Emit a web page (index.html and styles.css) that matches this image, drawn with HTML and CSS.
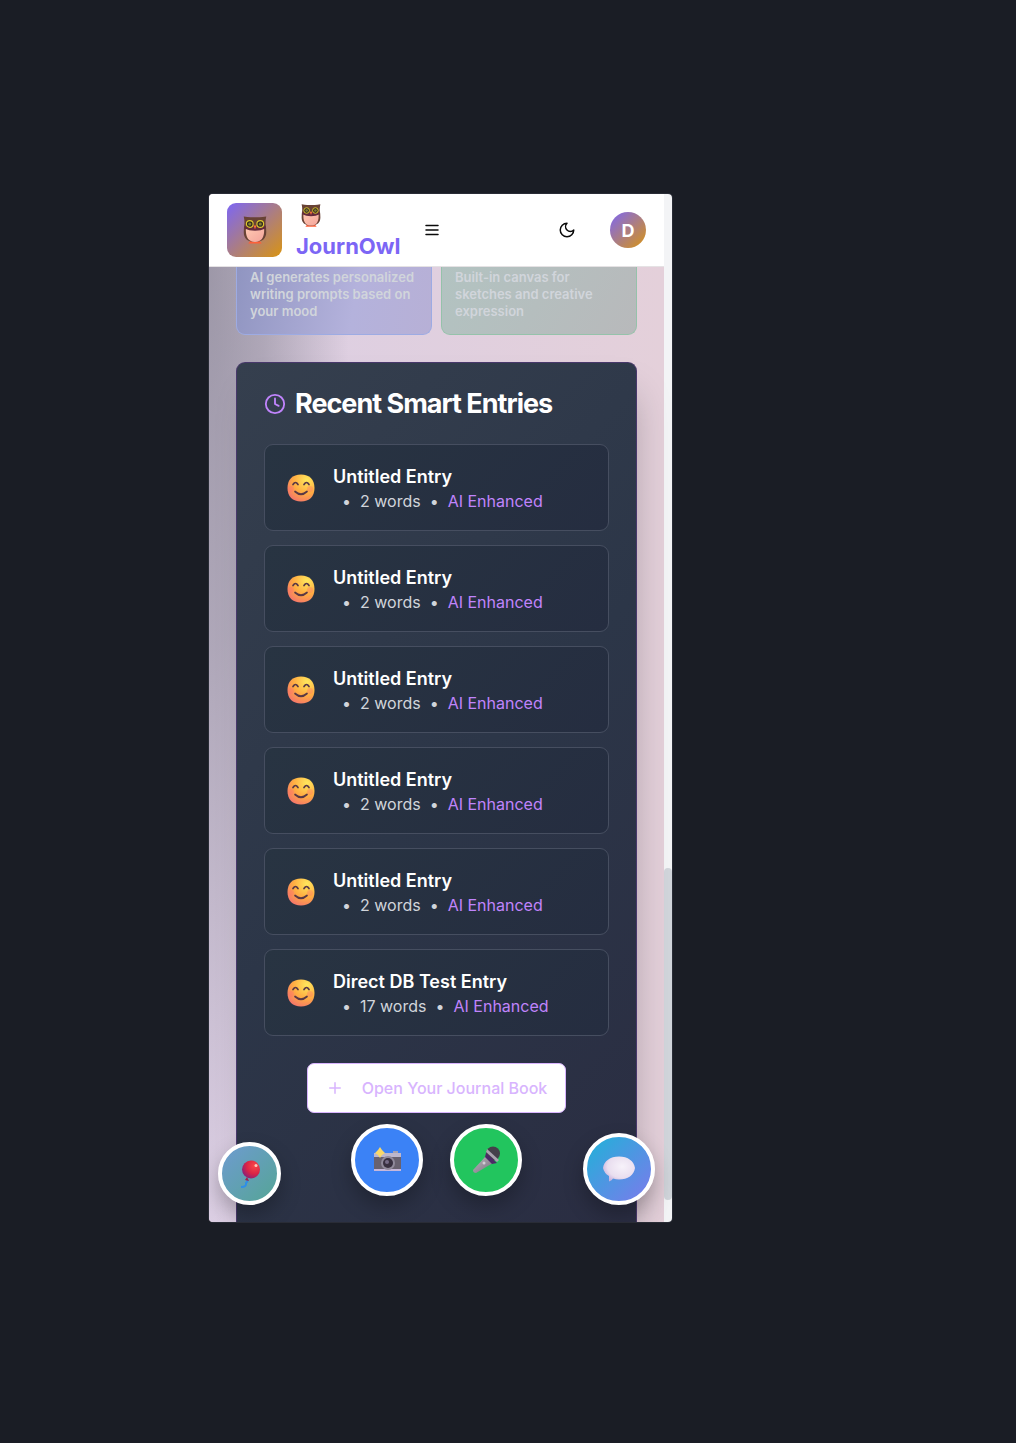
FILE: index.html
```html
<!DOCTYPE html>
<html lang="en">
<head>
<meta charset="utf-8">
<meta name="viewport" content="width=device-width, initial-scale=1">
<title>JournOwl</title>
<link rel="stylesheet" href="styles.css">
</head>
<body>
<svg class="defs" aria-hidden="true">
  <defs>
    <radialGradient id="face" cx=".72" cy=".2" r=".9"><stop offset="0" stop-color="#ffe75c"/><stop offset=".55" stop-color="#ffad42"/><stop offset="1" stop-color="#f4746b"/></radialGradient>
    <radialGradient id="balloon" cx=".7" cy=".3" r=".75"><stop offset="0" stop-color="#f94747"/><stop offset=".6" stop-color="#d92447"/><stop offset="1" stop-color="#8e2175"/></radialGradient>
    <radialGradient id="bubble" cx=".6" cy=".4" r=".65"><stop offset="0" stop-color="#f7f2fa"/><stop offset=".7" stop-color="#e9deef"/><stop offset="1" stop-color="#c9b3de"/></radialGradient>
    <linearGradient id="belly" x1="0" y1="0" x2="1" y2="1"><stop offset="0" stop-color="#ffc9b2"/><stop offset="1" stop-color="#f3a49b"/></linearGradient>
    <linearGradient id="handle" x1="0" y1="0" x2="1" y2="1"><stop offset="0" stop-color="#bdb7c0"/><stop offset="1" stop-color="#776f7e"/></linearGradient>
  </defs>
  <symbol id="owl" viewBox="0 0 32 40">
    <path d="M10 34h12l3 4H7z" fill="#ff6038"/>
    <path d="M1 2q5 1 9 1h12q4 0 9-1-1 4-1 9 1 6 1 12c0 8-5 13-15 13S1 31 1 23q0-6 1-12 0-5-1-9z" fill="#684235"/>
    <path d="M4 17h24c1 11-2 19-12 19S3 28 4 17z" fill="url(#belly)"/>
    <path d="M2 15h28v3q-6 3-14 3T2 18z" fill="#632a3c"/>
    <circle cx="9" cy="12" r="4.500" fill="#332d20" stroke="#dcc52c" stroke-width="1.500"/>
    <circle cx="23" cy="12" r="4.500" fill="#332d20" stroke="#dcc52c" stroke-width="1.500"/>
    <circle cx="9" cy="12" r="2" fill="#827d37"/><circle cx="23" cy="12" r="2" fill="#827d37"/>
    <path d="M14 14h4l-2 5z" fill="#ff703d"/>
  </symbol>
  <symbol id="smile" viewBox="0 0 28 28">
    <path d="M14 .5C22.500.5 27.500 5.500 27.500 14S22.500 27.500 14 27.500.5 22.500.5 14 5.500.5 14 .5z" fill="url(#face)"/>
    <circle cx="4" cy="15" r="3" fill="#ff6f6c" opacity=".35"/><circle cx="23" cy="15" r="3" fill="#ff6f6c" opacity=".35"/>
    <path d="M6 10.500q2.500-4 5 0M17 10.500q2.500-4 5 0M8 17.500q6 5.500 12 0" fill="none" stroke="#593845" stroke-width="1.700" stroke-linecap="round"/>
  </symbol>
</svg>

<div class="stage">
  <div class="device">
    <div class="screen">
      <header class="topbar">
        <span class="logo"><svg class="owl-lg" aria-hidden="true"><use href="#owl"/></svg></span>
        <h1 class="brand"><svg class="owl-sm" aria-hidden="true"><use href="#owl"/></svg><span>JournOwl</span></h1>
        <button class="icon-btn" aria-label="Open menu"><svg class="icon" viewBox="0 0 24 24"><path d="M4 6h16M4 12h16M4 18h16"/></svg></button>
        <button class="icon-btn theme" aria-label="Dark mode"><svg class="icon" viewBox="0 0 24 24"><path d="M12 3a6 6 0 0 0 9 9 9 9 0 1 1-9-9z"/></svg></button>
        <button class="avatar">D</button>
      </header>

      <main class="content">
        <div class="features">
          <p class="feature prompts">AI generates personalized writing prompts based on your mood</p>
          <p class="feature canvas">Built-in canvas for sketches and creative expression</p>
        </div>

        <section class="panel">
          <h2 class="panel-title"><svg class="clock" viewBox="0 0 24 24" aria-hidden="true"><circle cx="12" cy="12" r="10"/><path d="M12 6v6l4 2"/></svg>Recent Smart Entries</h2>
          <ul class="entries">
            <li class="entry"><svg class="mood" aria-hidden="true"><use href="#smile"/></svg><div><h3>Untitled Entry</h3><p class="meta"><span>•</span><span>2 words</span><span>•</span><span class="ai">AI Enhanced</span></p></div></li>
            <li class="entry"><svg class="mood" aria-hidden="true"><use href="#smile"/></svg><div><h3>Untitled Entry</h3><p class="meta"><span>•</span><span>2 words</span><span>•</span><span class="ai">AI Enhanced</span></p></div></li>
            <li class="entry"><svg class="mood" aria-hidden="true"><use href="#smile"/></svg><div><h3>Untitled Entry</h3><p class="meta"><span>•</span><span>2 words</span><span>•</span><span class="ai">AI Enhanced</span></p></div></li>
            <li class="entry"><svg class="mood" aria-hidden="true"><use href="#smile"/></svg><div><h3>Untitled Entry</h3><p class="meta"><span>•</span><span>2 words</span><span>•</span><span class="ai">AI Enhanced</span></p></div></li>
            <li class="entry"><svg class="mood" aria-hidden="true"><use href="#smile"/></svg><div><h3>Untitled Entry</h3><p class="meta"><span>•</span><span>2 words</span><span>•</span><span class="ai">AI Enhanced</span></p></div></li>
            <li class="entry"><svg class="mood" aria-hidden="true"><use href="#smile"/></svg><div><h3>Direct DB Test Entry</h3><p class="meta"><span>•</span><span>17 words</span><span>•</span><span class="ai">AI Enhanced</span></p></div></li>
          </ul>
          <button class="open-book"><svg class="icon" viewBox="0 0 24 24" aria-hidden="true"><path d="M5 12h14M12 5v14"/></svg>Open Your Journal Book</button>
        </section>
      </main>

      <button class="fab balloon" aria-label="Celebrate">
        <svg viewBox="0 0 28 28"><path d="M11 19q1 3-1 4 1 4-5 4" fill="none" stroke="#2e8fe8" stroke-width="2"/><path d="M11 17l-2 3 4 1z" fill="#a31f49"/><circle cx="15" cy="9.500" r="9" fill="url(#balloon)"/><circle cx="20" cy="5.500" r="1.500" fill="#ffc9bd"/></svg>
      </button>
      <button class="fab camera" aria-label="Take a photo">
        <svg viewBox="0 0 28 26"><path d="M20 4h5v3h-5z" fill="#a8a3b0"/><rect x="1" y="6" width="27" height="18" rx="1" fill="#68616f"/><path d="M1 6h27v4H1z" fill="#bdb7cc"/><path d="M1 22h27v2H1z" fill="#c6b7da"/><circle cx="15" cy="16" r="7" fill="#908a9b"/><circle cx="15" cy="16" r="5" fill="#383040"/><circle cx="14" cy="15" r="2" fill="#756b86"/><path d="M7 0l2 3 3 3-3 2-2 3-2-3-3-2 3-3z" fill="#f8d86a"/></svg>
      </button>
      <button class="fab mic" aria-label="Record audio">
        <svg viewBox="0 0 28 28"><path d="M14 10l7 7L4 27q-3 0-3-3z" fill="url(#handle)"/><circle cx="21" cy="7.500" r="7" fill="#44404a"/><path d="M14 7l11 10-5 1-7-7z" fill="#4c2967"/><path d="M15 3l12 11-2 2L14 6z" fill="#aaa4b0"/><circle cx="12" cy="17" r="1.500" fill="#d2ccd5"/></svg>
      </button>
      <button class="fab chat" aria-label="Open chat">
        <svg viewBox="0 0 34 28"><path d="M1 13C2 6 8 1.500 17 1.500S32 6 33 13c-1 7-7 11.500-16 11.500q-3 0-6-1-1 2-4 3V21q-5-3-6-8z" fill="url(#bubble)"/></svg>
      </button>
    </div>
    <div class="scrollbar"><div class="thumb"></div></div>
  </div>
</div>
</body>
</html>
```
FILE: styles.css
```css
* { box-sizing: border-box; }
body { margin: 0; background: #1a1d25; font-family: Inter, "Liberation Sans", sans-serif; }
h1, h2, h3, p, ul { margin: 0; padding: 0; }
button { font: inherit; border: 0; padding: 0; cursor: pointer; }
.defs { position: absolute; width: 0; height: 0; }

.stage { padding: 194px 344px 221px 209px; }
.device { display: flex; border-radius: 4px; overflow: hidden; box-shadow: 0 0 0 1px #292c36; }
.screen { position: relative; flex: 1; min-width: 0; background: #dfcbd6; }
.scrollbar { display: flex; flex-direction: column; justify-content: flex-end; flex: 0 0 8px; padding-bottom: 22px; background: #f3f4f6; }
.thumb { height: 33%; border-radius: 4px; background: #d1d5db; }

.topbar { display: flex; align-items: center; height: 73px; padding: 0 18px; background: #fff; border-bottom: 1px solid #e5e2e4; }
.logo { display: grid; place-items: center; flex: none; width: 55px; height: 54px; border-radius: 9px; background: linear-gradient(135deg, #7c66f5, #d99412); }
.owl-lg { width: 24px; height: 30px; }
.brand { display: flex; flex-direction: column; gap: 3px; margin-left: 14px; padding-top: 4px; color: #7c66f5; font-size: 22px; font-weight: 700; line-height: 30px; }
.owl-sm { width: 20px; height: 25px; margin-left: 5px; }
.icon { width: 18px; height: 18px; fill: none; stroke: currentColor; stroke-width: 2; stroke-linecap: round; stroke-linejoin: round; }
.icon-btn { display: grid; place-items: center; width: 36px; height: 36px; background: none; color: #0a0a0a; }
.brand + .icon-btn { margin-left: 14px; }
.theme { margin-left: auto; margin-right: 25px; }
.avatar { width: 36px; height: 36px; border-radius: 50%; background: linear-gradient(135deg, #7c66f5, #d99412); color: #fff; font-size: 18px; font-weight: 700; }

.content {
  padding: 0 27px;
  background:
    radial-gradient(ellipse 140px 960px at 0 0, rgba(70, 75, 85, .42), rgba(70, 75, 85, .3) 40%, rgba(70, 75, 85, 0)),
    linear-gradient(to right, #dccfe4, #e4d0da);
}
.features { display: grid; grid-template-columns: 1fr 1fr; gap: 9px; }
.feature { padding: 2px 13px 14px; border: 1px solid; border-top: 0; border-radius: 0 0 9px 9px; font-size: 13px; font-weight: 600; line-height: 17px; color: #d1d5db; }
.prompts { border-color: #9dabe3; background: linear-gradient(100deg, #9095c1, #b4b2dc 60%, #b7b0d6); }
.canvas { border-color: #95c2aa; background: linear-gradient(120deg, #b2c3c1, #b8b9bb); }

.panel { display: flex; flex-direction: column; align-items: center; margin-top: 27px; padding: 22px 27px 109px; border: 1px solid #48386b; border-bottom: 0; border-radius: 9px 9px 0 0; background: linear-gradient(135deg, #353f4e, #2c3648 50%, #2a2d42); box-shadow: 8px 22px 36px -12px rgba(0, 0, 0, .25); }
.panel-title { display: flex; align-items: center; gap: 9px; align-self: stretch; color: #fff; font-size: 27px; font-weight: 700; line-height: 38px; letter-spacing: -1px; white-space: nowrap; }
.clock { width: 22px; height: 22px; fill: none; stroke: #c084fc; stroke-width: 2; stroke-linecap: round; stroke-linejoin: round; }
.entries { display: grid; gap: 14px; align-self: stretch; margin-top: 21px; list-style: none; }
.entry { display: flex; align-items: center; gap: 18px; height: 87px; padding: 0 22px; border: 1px solid #464e60; border-radius: 9px; background: linear-gradient(135deg, #283442, #252d40); }
.mood { flex: none; width: 28px; height: 28px; }
.entry h3 { color: #fff; font-size: 18px; font-weight: 600; line-height: 26px; }
.meta { display: flex; gap: 9px; padding-left: 9px; color: #d1d5db; font-size: 16px; line-height: 22px; }
.ai { color: #c084fc; }
.open-book { display: flex; align-items: center; gap: 18px; height: 50px; margin-top: 27px; padding: 0 18px; border: 1px solid #d8b4fe; border-radius: 7px; background: #fff; color: #d8b4fe; font-size: 16px; font-weight: 500; white-space: nowrap; }

.fab { position: absolute; display: grid; place-items: center; width: 72px; height: 72px; border: 4px solid #fff; border-radius: 50%; box-shadow: 0 10px 20px rgba(0, 0, 0, .25); }
.fab svg { width: 28px; height: 28px; }
.balloon { left: 9px; bottom: 17px; width: 63px; height: 63px; background: linear-gradient(135deg, #6e9bd0, #55a596); }
.camera { left: 142px; bottom: 26px; background: #3b82f6; }
.mic { left: 241px; bottom: 26px; background: #22c55e; }
.chat { right: 9px; bottom: 17px; background: linear-gradient(135deg, #20b2d8, #7c7aec); }
.chat svg { width: 34px; }
```
